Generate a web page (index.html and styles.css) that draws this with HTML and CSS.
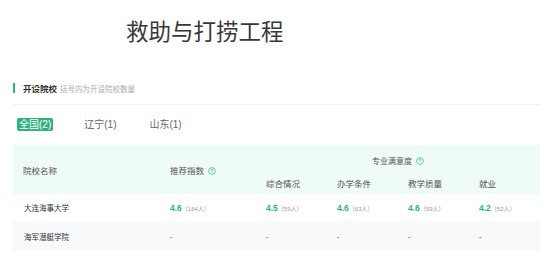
FILE: index.html
```html
<!DOCTYPE html>
<html lang="zh">
<head>
<meta charset="utf-8">
<link rel="stylesheet" href="styles.css">
</head>
<body>
<div class="page">
  <h1 class="title">救助与打捞工程</h1>
  <div class="section-head">
    <span class="bar"></span>
    <span class="sec-title">开设院校</span>
    <span class="sec-sub">括号内为开设院校数量</span>
  </div>
  <div class="tabs">
    <span class="tab active">全国(2)</span>
    <span class="tab">辽宁(1)</span>
    <span class="tab">山东(1)</span>
  </div>
  <table class="tbl">
    <colgroup>
      <col class="c-name"><col class="c-rec"><col class="c-sub"><col class="c-sub"><col class="c-sub"><col class="c-sub">
    </colgroup>
    <thead>
      <tr class="hr1">
        <th rowspan="2">院校名称</th>
        <th rowspan="2" class="rec">推荐指数 <svg class="q" viewBox="0 0 10 10"><circle cx="5" cy="5" r="4.3" fill="none" stroke="currentColor" stroke-width="0.8"/><path d="M3.6 4 Q3.6 2.7 5 2.7 Q6.4 2.7 6.4 3.9 Q6.4 4.7 5 5.2 V6" fill="none" stroke="currentColor" stroke-width="0.8"/><circle cx="5" cy="7.3" r="0.5" fill="currentColor"/></svg></th>
        <th colspan="4" class="grp">专业满意度 <svg class="q" viewBox="0 0 10 10"><circle cx="5" cy="5" r="4.3" fill="none" stroke="currentColor" stroke-width="0.8"/><path d="M3.6 4 Q3.6 2.7 5 2.7 Q6.4 2.7 6.4 3.9 Q6.4 4.7 5 5.2 V6" fill="none" stroke="currentColor" stroke-width="0.8"/><circle cx="5" cy="7.3" r="0.5" fill="currentColor"/></svg></th>
      </tr>
      <tr class="hr2">
        <th>综合情况</th>
        <th>办学条件</th>
        <th>教学质量</th>
        <th>就业</th>
      </tr>
    </thead>
    <tbody>
      <tr>
        <td class="name">大连海事大学</td>
        <td><b class="score">4.6</b><span class="cnt">（164人）</span></td>
        <td><b class="score">4.5</b><span class="cnt">（59人）</span></td>
        <td><b class="score">4.6</b><span class="cnt">（63人）</span></td>
        <td><b class="score">4.6</b><span class="cnt">（59人）</span></td>
        <td><b class="score">4.2</b><span class="cnt">（52人）</span></td>
      </tr>
      <tr class="alt">
        <td class="name">海军潜艇学院</td>
        <td class="dash">-</td>
        <td class="dash">-</td>
        <td class="dash">-</td>
        <td class="dash">-</td>
        <td class="dash">-</td>
      </tr>
    </tbody>
  </table>
</div>
</body>
</html>
```

FILE: styles.css
```css
* { box-sizing: border-box; }
html, body { margin: 0; padding: 0; background: #fff; }
body {
  font-family: "Liberation Sans", "Noto Sans CJK SC", sans-serif;
  color: #333;
  width: 549px;
  height: 257px;
  overflow: hidden;
}
.page {
  padding: 0 9px 0 13px;
}
.title {
  margin: 0;
  padding: 19px 0 0 113px;
  font-size: 22.5px;
  font-weight: 400;
  line-height: 28px;
  color: #383838;
  height: 82px;
}
.section-head {
  display: flex;
  align-items: center;
  gap: 7px;
  height: 10px;
  margin-top: 1px;
}
.bar {
  width: 2px;
  height: 10px;
  background: #2eb27c;
}
.sec-title {
  font-size: 8.5px;
  font-weight: 700;
  color: #333;
  margin-left: 1px;
  margin-right: -4px;
}
.sec-sub {
  font-size: 7.5px;
  color: #aaa;
}
.tabs {
  margin-top: 11px;
  border-top: 1px solid #f0f0f0;
  padding-top: 13px;
  display: flex;
  align-items: center;
  gap: 29px;
  padding-left: 4px;
}
.tab {
  font-size: 10px;
  line-height: 13px;
  color: #666;
  padding: 0 2px;
  border-radius: 2px;
}
.tab.active {
  background: #2eb27c;
  color: #fff;
}
.tbl {
  margin-top: 14px;
  width: 527px;
  border-collapse: collapse;
  table-layout: fixed;
}
.c-name { width: 147px; }
.c-rec { width: 96px; }
.c-sub { width: 71px; }
.tbl thead th {
  background: #effbf6;
  font-weight: 400;
  color: #555;
  text-align: left;
  font-size: 8.5px;
  padding: 0 0 0 10px;
}
.tbl thead th.rec { vertical-align: middle; }
.hr1 th { height: 26px; }
.hr2 th { height: 23px; font-size: 9px; padding-bottom: 4px; }
.tbl thead th.grp { text-align: center; padding: 4px 0 0 0; font-size: 8px; vertical-align: middle; }
.q {
  width: 8px;
  height: 8px;
  color: #2eb27c;
  vertical-align: -1px;
  margin-left: 2px;
}
.tbl td {
  font-size: 7px;
  padding: 0 0 0 10px;
  height: 27px;
  color: #333;
  white-space: nowrap;
}
.tbl tr.alt td { background: #f8f9fa; height: 30px; }
.tbl td.name { padding-left: 11px; font-size: 7.5px; }
.score {
  color: #2eb27c;
  font-size: 8.5px;
  font-weight: 700;
}
.cnt {
  color: #999;
  font-size: 6px;
}
.dash { color: #999; }
```
